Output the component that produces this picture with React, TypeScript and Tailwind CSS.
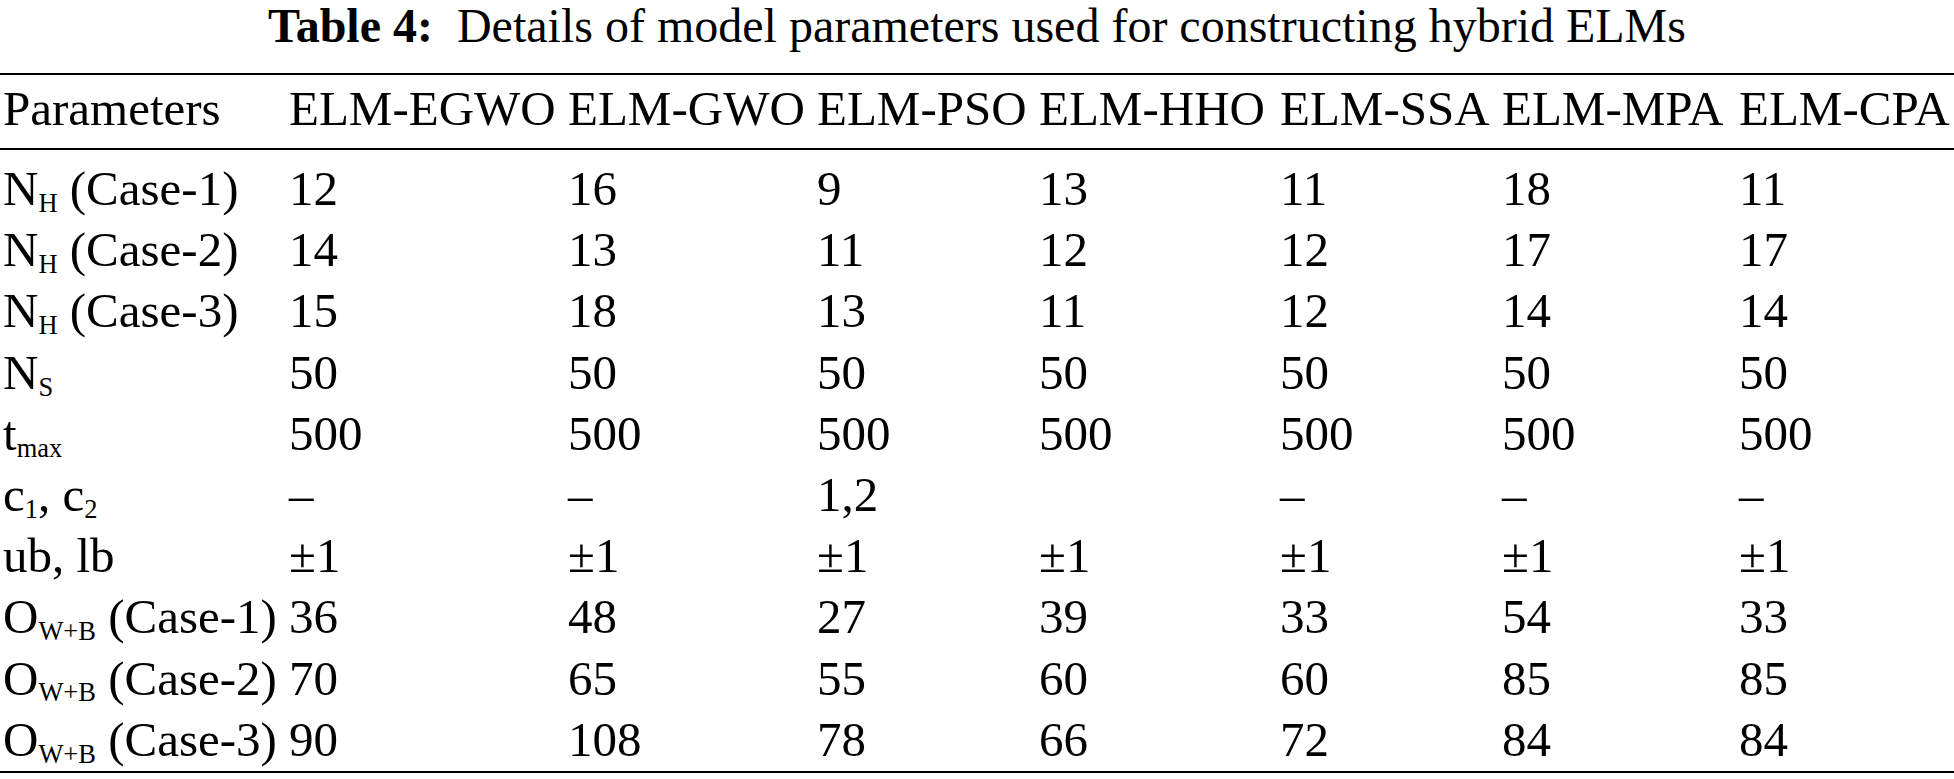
import React from "react";

const Sub = ({ children }: { children: React.ReactNode }) => (
  <span className="relative top-[0.26em] text-[0.54em] leading-none">{children}</span>
);

type Row = { label: React.ReactNode; values: string[] };

const rows: Row[] = [
  { label: <>N<Sub>H</Sub> (Case-1)</>, values: ["12", "16", "9", "13", "11", "18", "11"] },
  { label: <>N<Sub>H</Sub> (Case-2)</>, values: ["14", "13", "11", "12", "12", "17", "17"] },
  { label: <>N<Sub>H</Sub> (Case-3)</>, values: ["15", "18", "13", "11", "12", "14", "14"] },
  { label: <>N<Sub>S</Sub></>, values: ["50", "50", "50", "50", "50", "50", "50"] },
  { label: <>t<Sub>max</Sub></>, values: ["500", "500", "500", "500", "500", "500", "500"] },
  { label: <>c<Sub>1</Sub>, c<Sub>2</Sub></>, values: ["–", "–", "1,2", "", "–", "–", "–"] },
  { label: <>ub, lb</>, values: ["±1", "±1", "±1", "±1", "±1", "±1", "±1"] },
  { label: <>O<Sub>W+B</Sub> (Case-1)</>, values: ["36", "48", "27", "39", "33", "54", "33"] },
  { label: <>O<Sub>W+B</Sub> (Case-2)</>, values: ["70", "65", "55", "60", "60", "85", "85"] },
  { label: <>O<Sub>W+B</Sub> (Case-3)</>, values: ["90", "108", "78", "66", "72", "84", "84"] },
];

const headers = ["ELM-EGWO", "ELM-GWO", "ELM-PSO", "ELM-HHO", "ELM-SSA", "ELM-MPA", "ELM-CPA"];

const grid =
  "grid grid-cols-[286px_279px_249px_222px_241px_222px_237px_1fr] pl-[3px]";

export default function App() {
  return (
    <div
      className="w-[1954px] h-[779px] bg-white text-black overflow-hidden"
      style={{ fontFamily: '"Liberation Serif", "Times New Roman", serif' }}
    >
      <div className="h-[73px] text-center text-[48px] leading-[52px] whitespace-pre">
        <span className="font-bold">Table 4:</span>
        {"  Details of model parameters used for constructing hybrid ELMs"}
      </div>
      <div className="border-t-2 border-black">
        <div className={`${grid} h-[73px] pb-[6px] items-center text-[49px] leading-none whitespace-nowrap`}>
          <div>Parameters</div>
          {headers.map((h) => (
            <div key={h}>{h}</div>
          ))}
        </div>
      </div>
      <div className="border-t-2 border-b-2 border-black pt-[8px] pb-[1px]">
        {rows.map((r, i) => (
          <div
            key={i}
            className={`${grid} h-[61.2px] items-center text-[49px] leading-none whitespace-nowrap`}
          >
            <div>{r.label}</div>
            {r.values.map((v, j) => (
              <div key={j}>{v}</div>
            ))}
          </div>
        ))}
      </div>
    </div>
  );
}
